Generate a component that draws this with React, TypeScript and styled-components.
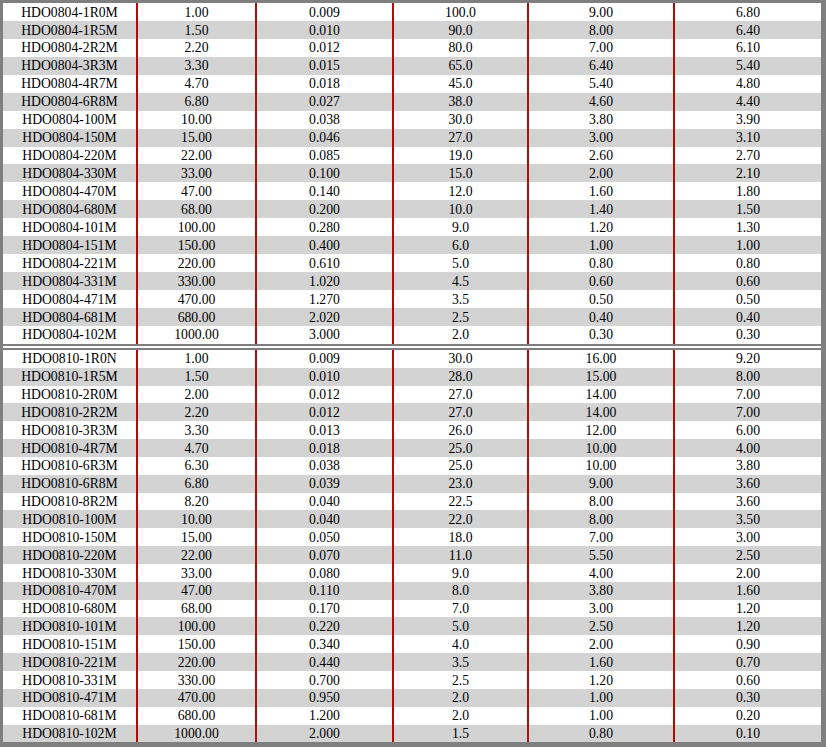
import styled, { createGlobalStyle } from "styled-components";

const GlobalStyle = createGlobalStyle`
    html, body {
        margin: 0;
        padding: 0;
        background-color: #ffffff;
    }
`;

// 品番, L(uH), DCR, SRF, Isat, Irms
type Row = [string, string, string, string, string, string];

const series0804: Row[] = [
    ["HDO0804-1R0M", "1.00", "0.009", "100.0", "9.00", "6.80"],
    ["HDO0804-1R5M", "1.50", "0.010", "90.0", "8.00", "6.40"],
    ["HDO0804-2R2M", "2.20", "0.012", "80.0", "7.00", "6.10"],
    ["HDO0804-3R3M", "3.30", "0.015", "65.0", "6.40", "5.40"],
    ["HDO0804-4R7M", "4.70", "0.018", "45.0", "5.40", "4.80"],
    ["HDO0804-6R8M", "6.80", "0.027", "38.0", "4.60", "4.40"],
    ["HDO0804-100M", "10.00", "0.038", "30.0", "3.80", "3.90"],
    ["HDO0804-150M", "15.00", "0.046", "27.0", "3.00", "3.10"],
    ["HDO0804-220M", "22.00", "0.085", "19.0", "2.60", "2.70"],
    ["HDO0804-330M", "33.00", "0.100", "15.0", "2.00", "2.10"],
    ["HDO0804-470M", "47.00", "0.140", "12.0", "1.60", "1.80"],
    ["HDO0804-680M", "68.00", "0.200", "10.0", "1.40", "1.50"],
    ["HDO0804-101M", "100.00", "0.280", "9.0", "1.20", "1.30"],
    ["HDO0804-151M", "150.00", "0.400", "6.0", "1.00", "1.00"],
    ["HDO0804-221M", "220.00", "0.610", "5.0", "0.80", "0.80"],
    ["HDO0804-331M", "330.00", "1.020", "4.5", "0.60", "0.60"],
    ["HDO0804-471M", "470.00", "1.270", "3.5", "0.50", "0.50"],
    ["HDO0804-681M", "680.00", "2.020", "2.5", "0.40", "0.40"],
    ["HDO0804-102M", "1000.00", "3.000", "2.0", "0.30", "0.30"],
];

const series0810: Row[] = [
    ["HDO0810-1R0N", "1.00", "0.009", "30.0", "16.00", "9.20"],
    ["HDO0810-1R5M", "1.50", "0.010", "28.0", "15.00", "8.00"],
    ["HDO0810-2R0M", "2.00", "0.012", "27.0", "14.00", "7.00"],
    ["HDO0810-2R2M", "2.20", "0.012", "27.0", "14.00", "7.00"],
    ["HDO0810-3R3M", "3.30", "0.013", "26.0", "12.00", "6.00"],
    ["HDO0810-4R7M", "4.70", "0.018", "25.0", "10.00", "4.00"],
    ["HDO0810-6R3M", "6.30", "0.038", "25.0", "10.00", "3.80"],
    ["HDO0810-6R8M", "6.80", "0.039", "23.0", "9.00", "3.60"],
    ["HDO0810-8R2M", "8.20", "0.040", "22.5", "8.00", "3.60"],
    ["HDO0810-100M", "10.00", "0.040", "22.0", "8.00", "3.50"],
    ["HDO0810-150M", "15.00", "0.050", "18.0", "7.00", "3.00"],
    ["HDO0810-220M", "22.00", "0.070", "11.0", "5.50", "2.50"],
    ["HDO0810-330M", "33.00", "0.080", "9.0", "4.00", "2.00"],
    ["HDO0810-470M", "47.00", "0.110", "8.0", "3.80", "1.60"],
    ["HDO0810-680M", "68.00", "0.170", "7.0", "3.00", "1.20"],
    ["HDO0810-101M", "100.00", "0.220", "5.0", "2.50", "1.20"],
    ["HDO0810-151M", "150.00", "0.340", "4.0", "2.00", "0.90"],
    ["HDO0810-221M", "220.00", "0.440", "3.5", "1.60", "0.70"],
    ["HDO0810-331M", "330.00", "0.700", "2.5", "1.20", "0.60"],
    ["HDO0810-471M", "470.00", "0.950", "2.0", "1.00", "0.30"],
    ["HDO0810-681M", "680.00", "1.200", "2.0", "1.00", "0.20"],
    ["HDO0810-102M", "1000.00", "2.000", "1.5", "0.80", "0.10"],
];

const columnWidths = [133, 119, 137, 135, 146, 148];

const Frame = styled.div`
    width: 826px;
    height: 747px;
    box-sizing: border-box;
    border-left: 3px solid #7f7f7f;
    border-right: 5px solid #7f7f7f;
    border-bottom: 5px solid #7f7f7f;
    display: flex;
    flex-direction: column;
    gap: 2px;
    overflow: hidden;
`;

const Block = styled.div<{ $top: number; $bottom: number }>`
    border-top: ${(p) => p.$top}px solid #7f7f7f;
    border-bottom: ${(p) => p.$bottom}px solid #7f7f7f;
`;

const Sheet = styled.table`
    width: 818px;
    table-layout: fixed;
    border-collapse: separate;
    border-spacing: 0;
    font-family: "Liberation Serif", "Times New Roman", serif;
    font-size: 13.7px;
    color: #000000;
`;

const Line = styled.tr<{ $shaded: boolean; $height: number }>`
    height: ${(p) => p.$height}px;
    background-color: ${(p) => (p.$shaded ? "#d3d3d3" : "#ffffff")};
`;

const Cell = styled.td<{ $first: boolean }>`
    padding: 1px 0 0;
    text-align: center;
    vertical-align: middle;
    line-height: 1;
    white-space: nowrap;
    border-left: ${(p) => (p.$first ? "none" : "2px solid #b10c0c")};
`;

function SeriesTable({ rows, rowHeight }: { rows: Row[]; rowHeight: number }) {
    return (
        <Sheet>
            <colgroup>
                {columnWidths.map((w, i) => (
                    <col key={i} style={{ width: w }} />
                ))}
            </colgroup>
            <tbody>
                {rows.map((row, r) => (
                    <Line key={row[0]} $shaded={r % 2 === 1} $height={rowHeight}>
                        {row.map((value, c) => (
                            <Cell key={c} $first={c === 0}>
                                {value}
                            </Cell>
                        ))}
                    </Line>
                ))}
            </tbody>
        </Sheet>
    );
}

export default function App() {
    return (
        <>
            <GlobalStyle />
            <Frame>
                <Block $top={3} $bottom={2}>
                    <SeriesTable rows={series0804} rowHeight={17.95} />
                </Block>
                <Block $top={2} $bottom={0}>
                    <SeriesTable rows={series0810} rowHeight={17.85} />
                </Block>
            </Frame>
        </>
    );
}
